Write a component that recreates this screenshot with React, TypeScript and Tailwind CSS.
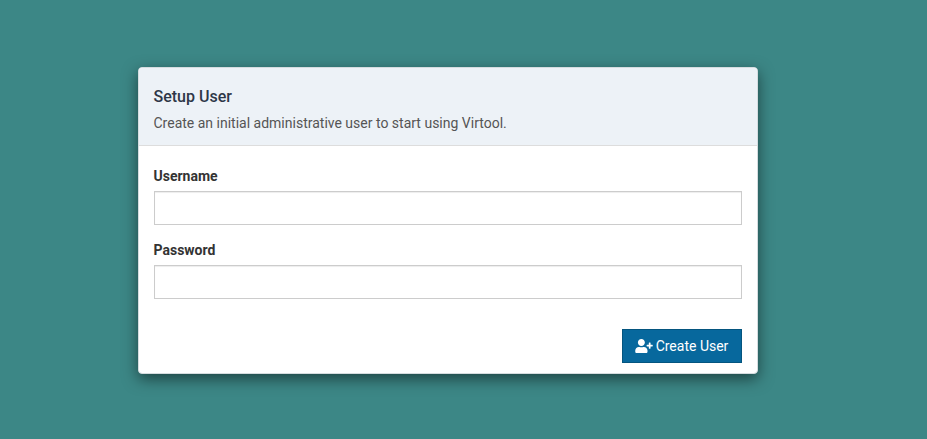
import React from "react";
import { FaUserPlus } from "react-icons/fa";

function Field({ label, type }: { label: string; type: string }) {
  return (
    <label className="mb-[15px] block">
      <span className="mb-[5px] block text-[14px] leading-[20px] font-bold">{label}</span>
      <input
        type={type}
        className="block h-[34px] w-full border border-[#cccccc] bg-white px-3 shadow-[inset_0_1px_1px_rgba(0,0,0,0.075)] outline-none"
      />
    </label>
  );
}

export default function App() {
  return (
    <main className="flex h-screen justify-center bg-[#3c8786] pr-[32px] pt-[67px] font-['Roboto','Liberation_Sans',sans-serif] text-[14px] leading-[20px] text-[#333333]">
      <section className="h-[307px] w-[620px] rounded-[4px] border border-[#d5dcdf] bg-white shadow-[0_5px_15px_rgba(0,0,0,0.5)]">
        <header className="h-[78px] rounded-t-[3px] border-b border-[#dddddd] bg-[#edf2f7] px-[15px] pt-[19px]">
          <h1 className="text-[16px] leading-[20px] font-medium text-[#2d3748]">Setup User</h1>
          <p className="mt-[6px] text-[#555555]">Create an initial administrative user to start using Virtool.</p>
        </header>
        <form className="px-[15px] pt-[20px]">
          <Field label="Username" type="text" />
          <Field label="Password" type="password" />
          <div className="mt-[30px] flex justify-end">
            <button
              type="button"
              className="flex h-[34px] w-[120px] items-center justify-center gap-[3px] border border-[#04557f] bg-[#07689d] text-white"
            >
              <FaUserPlus className="h-[14px] w-[18px]" />
              <span>Create User</span>
            </button>
          </div>
        </form>
      </section>
    </main>
  );
}
